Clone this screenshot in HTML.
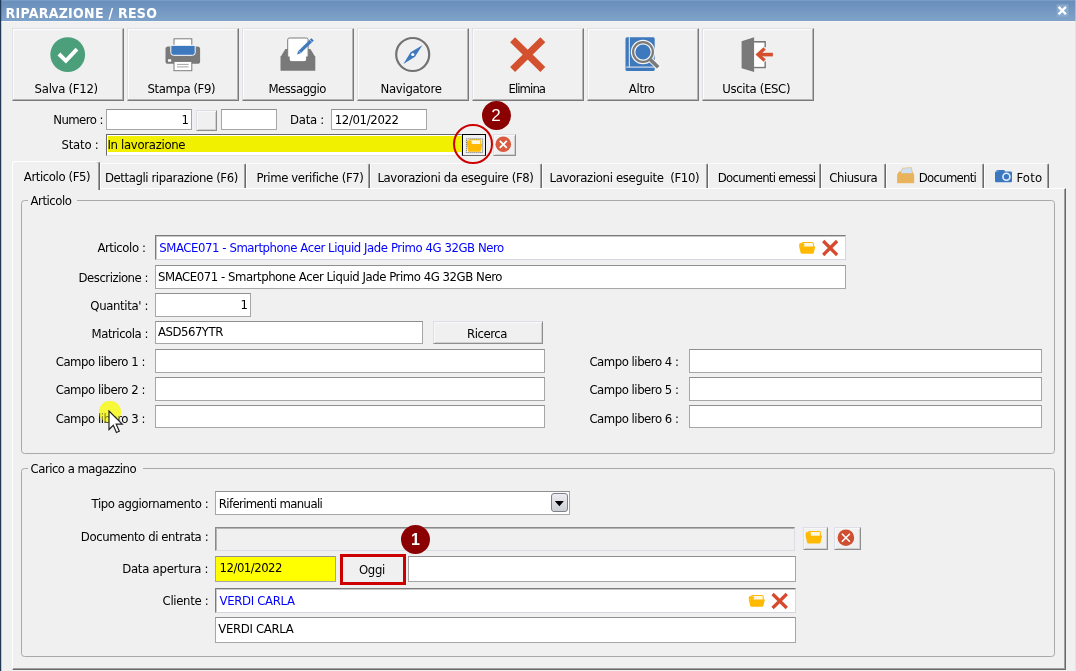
<!DOCTYPE html>
<html lang="it"><head><meta charset="utf-8"><title>RIPARAZIONE / RESO</title>
<style>
html,body{margin:0;padding:0;}
body{width:1076px;height:671px;overflow:hidden;background:#f0f0f0;font-family:'DejaVu Sans Condensed','Liberation Sans',sans-serif;font-size:13px;color:#000;}
#win{position:relative;width:1076px;height:671px;overflow:hidden;background:#f0f0f0;}
#win div,#win svg{position:absolute;box-sizing:border-box;}
.t{white-space:pre;line-height:20px;height:20px;}
#title{left:0;top:0;width:1076px;height:22px;background:linear-gradient(#7b9dc5 0,#7b9dc5 1px,#6a8fba 1px,#6b90bb 3px,#7fa2c9 20px,#7b9fc8 21px,#f5f5f3 21px);}
#lb{left:0;top:0;width:2px;height:671px;background:linear-gradient(90deg,#1e3856 50%,rgba(30,56,86,.22) 50%);}
#rb{left:1075px;top:0;width:1px;height:671px;background:linear-gradient(#9db8d8 0,#a9c1de 21px,#d9e5f2 21px);}
.tb{top:28px;height:73px;width:112px;border:1px solid;border-color:#e0e0e6 #7a7a7a #7a7a7a #e0e0e6;background:#f0f0f0;box-shadow:inset -1px -1px 0 #b4b4b4, inset 1px 1px 0 #fcfcfc;}
.in{background:#fff;border:1px solid #a6a6a6;border-top-color:#8f8f8f;}
.btn{background:#f0f0f0;border:1px solid;border-color:#fff #a0a0a0 #a0a0a0 #fff;box-shadow:1px 1px 0 #696969;}
.sep{width:2px;background:linear-gradient(90deg,#a0a0a0 50%,#696969 50%);}
.gb{border:1px solid #a9a9a9;border-radius:3.5px;}
.gl{background:#f0f0f0;height:12px;}
.tab{top:163px;height:25px;border:1px solid;border-color:#fcfcfc #696969 transparent #fcfcfc;border-bottom:none;box-shadow:inset -1px 0 0 #a0a0a0;border-radius:2px 2px 0 0;}
.btn2{background:#f0f0f0;border:1px solid;border-color:#dedee6 #8e8e8e #8e8e8e #dedee6;box-shadow:inset 1px 1px 0 #f8f8f8, inset -1px -1px 0 #d0d0d0;}
.sk{border-color:#7c7c7c #d6d6e0 #d6d6e0 #7c7c7c;box-shadow:inset 1px 1px 0 #c8c8c8;}

</style></head>
<body>
<div id="win">
<div id="title"></div>
<svg style="left:1056px;top:4px" width="13" height="13" viewBox="0 0 13 13"><rect x=".6" y=".3" width="11.8" height="12.4" fill="#90afd2" opacity=".75"/><path d="M2.6 2.9L9.9 10.2M9.9 2.9L2.6 10.2" stroke="#fff" stroke-width="2.3"/></svg>
<div id="lb"></div><div id="rb"></div>
<!-- toolbar -->
<div class="tb" style="left:12px"></div>
<div class="tb" style="left:127px"></div>
<div class="tb" style="left:242px"></div>
<div class="tb" style="left:357px"></div>
<div class="tb" style="left:472px"></div>
<div class="tb" style="left:587px"></div>
<div class="tb" style="left:702px"></div>
<!-- ICONS -->
<!-- top rows -->
<div class="in" style="left:106px;top:109px;width:86px;height:21px"></div>
<div class="btn2" style="left:196px;top:110px;width:21px;height:21px"></div>
<div class="in" style="left:221px;top:109px;width:56px;height:21px"></div>
<div class="in" style="left:331px;top:109px;width:96px;height:21px"></div>
<div class="in" style="left:106px;top:134px;width:356px;height:22px;border-color:#696969 #e3e3e3 #e3e3e3 #696969"><div style="left:1px;top:1px;width:354px;height:16px;background:#f0f000"></div></div>
<div class="btn" style="left:462px;top:134px;width:24px;height:22px;border-color:#000 #000 #696969 #000;box-shadow:none"></div>
<div class="btn2" style="left:493px;top:134px;width:23px;height:22px"></div>
<!-- tab panel -->
<div id="panel" style="left:11.5px;top:188px;width:1054.5px;height:482px;border:1px solid;border-color:#fff #696969 #696969 #fff;box-shadow:inset -1px -1px 0 #a0a0a0"></div>
<div id="tab1" style="left:12px;top:161px;width:88px;height:29px;background:#f0f0f0;border:1px solid;border-color:#fff #696969 transparent #fff;border-radius:3px 3px 0 0;border-bottom:none;box-shadow:inset -1px 0 0 #a0a0a0"></div>
<div class="tab" style="left:100px;width:146px"></div>
<div class="tab" style="left:246px;width:124px"></div>
<div class="tab" style="left:370px;width:172px"></div>
<div class="tab" style="left:542px;width:166px"></div>
<div class="tab" style="left:708px;width:113px"></div>
<div class="tab" style="left:821px;width:65px"></div>
<div class="tab" style="left:886px;width:98px"></div>
<div class="tab" style="left:984px;width:65px"></div>
<!-- group boxes -->
<div class="gb" style="left:21px;top:200px;width:1034px;height:254px"></div>
<div class="gl" style="left:28px;top:194px;width:49px"></div>
<div class="gb" style="left:21px;top:468px;width:1034px;height:189px"></div>
<div class="gl" style="left:28px;top:462px;width:115px"></div>
<!-- Articolo fields -->
<div class="in sk" style="left:155px;top:235px;width:691px;height:25px"></div>
<div class="in" style="left:155px;top:265px;width:691px;height:24px"></div>
<div class="in" style="left:155px;top:293px;width:96px;height:24px"></div>
<div class="in" style="left:155px;top:321px;width:268px;height:23px"></div>
<div class="btn2" style="left:433px;top:321px;width:110px;height:23px"></div>
<div class="in" style="left:155px;top:349px;width:390px;height:24px"></div>
<div class="in" style="left:155px;top:377px;width:390px;height:24px"></div>
<div class="in" style="left:155px;top:405px;width:390px;height:23px"></div>
<div class="in" style="left:689px;top:349px;width:353px;height:24px"></div>
<div class="in" style="left:689px;top:377px;width:353px;height:24px"></div>
<div class="in" style="left:689px;top:405px;width:353px;height:23px"></div>
<!-- Carico fields -->
<div class="in" style="left:215px;top:491px;width:355px;height:24px"></div>
<svg style="left:551px;top:493px" width="17" height="19" viewBox="0 0 17 19"><defs><linearGradient id="cg" x1="0" y1="0" x2="0" y2="1"><stop offset="0" stop-color="#ededf3"/><stop offset="1" stop-color="#cdcdd5"/></linearGradient></defs><rect x=".5" y=".5" width="16" height="18" rx="2.5" fill="url(#cg)" stroke="#808088"/><path d="M3.8 8h9.1l-4.55 5.2z" fill="#000"/></svg>
<div class="in" style="left:215px;top:527px;width:580px;height:24px;background:#f0f0f0;border-color:#8a8a8a #dcdce4 #dcdce4 #8a8a8a;box-shadow:inset 1px 1px 0 #b4b4b4"></div>
<div class="btn2" style="left:802.5px;top:527px;width:25.5px;height:23px"></div>
<div class="btn2" style="left:833.5px;top:527px;width:27.5px;height:23px"></div>
<div class="in" style="left:215px;top:556px;width:121px;height:26px;background:#ffff00"></div>
<div style="left:343px;top:557px;width:61px;height:25px;background:#f0f0f0"></div>
<div class="in" style="left:408px;top:556px;width:388px;height:26px"></div>
<div class="in sk" style="left:215px;top:588px;width:581px;height:25px"></div>
<div class="in" style="left:215px;top:617px;width:581px;height:26px"></div>
<svg id="icons" style="left:0;top:0" width="1076" height="671" viewBox="0 0 1076 671">
<!-- Salva -->
<circle cx="67.7" cy="54.6" r="17.4" fill="#4ba07b"/>
<path d="M58.9 54 L65.9 60.8 L77 49.2" fill="none" stroke="#fff" stroke-width="3.9"/>
<!-- Stampa -->
<rect x="174" y="38.8" width="17.8" height="9" fill="#fff" stroke="#7d7d7d" stroke-width="1"/>
<rect x="165.5" y="46.4" width="34.6" height="17.4" rx="2.6" fill="#797979"/>
<path d="M170.8 45.3h24.4v7.3a2.7 2.7 0 0 1 -2.7 2.7h-19a2.7 2.7 0 0 1 -2.7 -2.7z" fill="#3e79be" stroke="#fff" stroke-width="1"/>
<rect x="168" y="59.3" width="3.2" height="2.4" fill="#fff"/>
<rect x="174" y="61.5" width="17.8" height="9.2" fill="#fff" stroke="#7d7d7d" stroke-width="1"/>
<path d="M177 64.4h11.6M177 66.9h11.6" stroke="#9a9a9a" stroke-width="0.9"/>
<!-- Messaggio -->
<path d="M280.5 57 L285.4 49 H310.4 L315.3 57z" fill="#797979"/>
<rect x="287.7" y="38" width="20.4" height="24" rx="1.8" fill="#fff" stroke="#7d7d7d" stroke-width="1"/>
<path d="M280.5 56.5h9.2v2.8a2 2 0 0 0 2 2h12.4a2 2 0 0 0 2 -2v-2.8h9.2v14.3h-34.8z" fill="#797979"/>
<path d="M297 54.4 L298.3 51 L311.4 38.2 L313.8 40.6 L300.7 53.3z" fill="#3e79be"/><path d="M298.6 50.7l2.4 2.4M309.8 39.8l2.4 2.4" stroke="#cfdff0" stroke-width=".6"/>
<!-- Navigatore -->
<circle cx="412.7" cy="54.5" r="16.5" fill="none" stroke="#727272" stroke-width="2.2"/>
<path d="M422.4 45.2 L415 56.8 L403.4 63.9 L410.6 52.3z" fill="#3e79be"/>
<circle cx="412.8" cy="54.5" r="1.6" fill="#fff"/>
<!-- Elimina -->
<path d="M512.6 39.7L542.8 69.6M542.8 39.7L512.6 69.6" stroke="#d4512f" stroke-width="7"/>
<!-- Altro -->
<rect x="625.5" y="37.2" width="29.2" height="33.8" rx="1.5" fill="#3e79be"/>
<path d="M629.3 37.2V67.1M626.2 67.1H654.7" fill="none" stroke="#f0f0f0" stroke-width="1"/>
<circle cx="643" cy="52" r="9.9" fill="#3e79be" stroke="#f4f4f4" stroke-width="4.6"/>
<path d="M650.3 59.6L658.2 67.2" stroke="#f4f4f4" stroke-width="5.6" stroke-linecap="round"/>
<circle cx="643" cy="52" r="9.9" fill="none" stroke="#7a7a7a" stroke-width="2.2"/>
<path d="M650.3 59.6L658.2 67.2" stroke="#7a7a7a" stroke-width="3.6" stroke-linecap="butt"/>
<!-- Uscita -->
<path d="M754.1 42H765V47.2M765 61.6V67.3H754.1" fill="#fff" stroke="#787878" stroke-width="1.8"/>
<rect x="754" y="42.6" width="10.4" height="24.1" fill="#fff"/>
<path d="M741.6 41.2L754.1 37.2V72.1L741.6 68.2z" fill="#797979"/>
<path d="M759 54.6H772.9" stroke="#d4512f" stroke-width="3.6"/>
<path d="M764.6 48.6L758 54.6L764.6 60.6" fill="none" stroke="#d4512f" stroke-width="3.4"/>
<!-- Stato folder -->
<g transform="translate(466.6 139.3) scale(0.97 1.07)"><rect x="2.6" y=".5" width="11.9" height="6" rx="1" fill="#fff8e0" stroke="#ffb900" stroke-width="1"/><path d="M.1 4.8v-2.6a1 1 0 0 1 1 -1h4v3.6z" fill="#ffb900"/><path d="M0 4.4h16.2l-1.5 6.4a1.3 1.3 0 0 1 -1.3 .95h-10.6a1.3 1.3 0 0 1 -1.3 -.95z" fill="#ffb900"/></g>
<rect x="466.4" y="138.8" width="16.2" height="13.8" fill="none" stroke="#333" stroke-opacity=".75" stroke-width="1" stroke-dasharray="1 1"/>
<!-- Stato X -->
<circle cx="503.3" cy="144.3" r="7.8" fill="#da5a40"/>
<path d="M499.8 140.8l7 7m0 -7l-7 7" stroke="#fff" stroke-width="1.8"/>
<!-- Articolo folder + X -->
<g transform="translate(799.1 242)"><rect x="2.6" y=".5" width="11.9" height="6" rx="1" fill="#fff8e0" stroke="#ffb900" stroke-width="1"/><path d="M.1 4.8v-2.6a1 1 0 0 1 1 -1h4v3.6z" fill="#ffb900"/><path d="M0 4.4h16.2l-1.5 6.4a1.3 1.3 0 0 1 -1.3 .95h-10.6a1.3 1.3 0 0 1 -1.3 -.95z" fill="#ffb900"/></g>
<path d="M823.2 241L837.1 255M837.1 241L823.2 255" stroke="#d6492c" stroke-width="3.2"/>
<!-- Doc entrata folder btn + X btn -->
<g transform="translate(805.6 531) scale(1.02 1.06)"><rect x="2.6" y=".5" width="11.9" height="6" rx="1" fill="#fff8e0" stroke="#ffb900" stroke-width="1"/><path d="M.1 4.8v-2.6a1 1 0 0 1 1 -1h4v3.6z" fill="#ffb900"/><path d="M0 4.4h16.2l-1.5 6.4a1.3 1.3 0 0 1 -1.3 .95h-10.6a1.3 1.3 0 0 1 -1.3 -.95z" fill="#ffb900"/></g>
<circle cx="845.9" cy="537.7" r="8.3" fill="#d04e30"/>
<path d="M841.9 533.7l8 8m0 -8l-8 8" stroke="#fff" stroke-width="1.6"/>
<!-- Cliente folder + X -->
<g transform="translate(748.7 595)"><rect x="2.6" y=".5" width="11.9" height="6" rx="1" fill="#fff8e0" stroke="#ffb900" stroke-width="1"/><path d="M.1 4.8v-2.6a1 1 0 0 1 1 -1h4v3.6z" fill="#ffb900"/><path d="M0 4.4h16.2l-1.5 6.4a1.3 1.3 0 0 1 -1.3 .95h-10.6a1.3 1.3 0 0 1 -1.3 -.95z" fill="#ffb900"/></g>
<path d="M772.6 594L786.8 608M786.8 594L772.6 608" stroke="#d6492c" stroke-width="3.2"/>
<!-- tab icons -->
<path d="M897.3 174.5l1.6 -3h13.6l1.6 3v8.5h-16.8z" fill="#e9b35b"/>
<path d="M901 170.8l1.6 -2.6l8.8 -.6l1 6h-11.4z" fill="#cfe0f4" stroke="#e9b35b" stroke-width=".6"/>
<path d="M897.3 175h16.8v8.2h-16.8z" fill="#e9b35b"/>
<path d="M995 172.6a1.2 1.2 0 0 1 1.2 -1.2h2.2l.8 -1.4h5l.8 1.4h5.8a1.2 1.2 0 0 1 1.2 1.2v8.4a1.2 1.2 0 0 1 -1.2 1.2h-14.6a1.2 1.2 0 0 1 -1.2 -1.2z" fill="#3b78c0"/>
<circle cx="1006.4" cy="176.7" r="3.5" fill="#3b78c0" stroke="#e8eef8" stroke-width="1.6"/><rect x="996.4" y="170.2" width="3" height="1.4" fill="#3b78c0"/>
</svg>

<!-- text labels -->
<div class="t" style="left:5.5px;top:3.0px;letter-spacing:0.28px;color:#fff;font-weight:bold;font-size:14px;">RIPARAZIONE / RESO</div>
<div class="t" style="left:34.6px;top:79.0px;letter-spacing:-0.28px;">Salva (F12)</div>
<div class="t" style="left:147.6px;top:79.0px;letter-spacing:-0.43px;">Stampa (F9)</div>
<div class="t" style="left:268.4px;top:79.0px;letter-spacing:-0.48px;">Messaggio</div>
<div class="t" style="left:380.6px;top:79.0px;letter-spacing:-0.32px;">Navigatore</div>
<div class="t" style="left:508.5px;top:79.0px;letter-spacing:-0.93px;">Elimina</div>
<div class="t" style="left:628.8px;top:79.0px;letter-spacing:-0.32px;">Altro</div>
<div class="t" style="left:722.3px;top:79.0px;letter-spacing:-0.34px;">Uscita (ESC)</div>
<div class="t" style="left:53.2px;top:110.0px;letter-spacing:-0.55px;">Numero :</div>
<div class="t" style="left:181.5px;top:110.0px;letter-spacing:-1.25px;">1</div>
<div class="t" style="left:290.0px;top:110.0px;letter-spacing:-0.27px;">Data :</div>
<div class="t" style="left:334.7px;top:110.0px;letter-spacing:-0.34px;">12/01/2022</div>
<div class="t" style="left:61.5px;top:135.0px;letter-spacing:-0.21px;">Stato :</div>
<div class="t" style="left:107.4px;top:135.0px;letter-spacing:-0.31px;">In lavorazione</div>
<div class="t" style="left:23.8px;top:167.0px;letter-spacing:-0.4px;">Articolo (F5)</div>
<div class="t" style="left:104.9px;top:168.0px;letter-spacing:-0.4px;">Dettagli riparazione (F6)</div>
<div class="t" style="left:256.5px;top:168.0px;letter-spacing:-0.39px;">Prime verifiche (F7)</div>
<div class="t" style="left:377.4px;top:168.0px;letter-spacing:-0.36px;">Lavorazioni da eseguire (F8)</div>
<div class="t" style="left:549.5px;top:168.0px;letter-spacing:-0.35px;">Lavorazioni eseguite&nbsp; (F10)</div>
<div class="t" style="left:717.7px;top:168.0px;letter-spacing:-0.69px;">Documenti emessi</div>
<div class="t" style="left:829.3px;top:168.0px;letter-spacing:-0.48px;">Chiusura</div>
<div class="t" style="left:918.8px;top:168.0px;letter-spacing:-0.73px;">Documenti</div>
<div class="t" style="left:1016.4px;top:168.0px;letter-spacing:0.21px;">Foto</div>
<div class="t" style="left:30.6px;top:191.0px;letter-spacing:-0.47px;">Articolo</div>
<div class="t" style="left:97.4px;top:238.0px;letter-spacing:-0.42px;">Articolo :</div>
<div class="t" style="left:159.3px;top:238.0px;letter-spacing:-0.43px;color:#0000ff;">SMACE071 - Smartphone Acer Liquid Jade Primo 4G 32GB Nero</div>
<div class="t" style="left:78.5px;top:268.0px;letter-spacing:-0.47px;">Descrizione :</div>
<div class="t" style="left:158.0px;top:267.0px;letter-spacing:-0.44px;">SMACE071 - Smartphone Acer Liquid Jade Primo 4G 32GB Nero</div>
<div class="t" style="left:90.3px;top:296.0px;letter-spacing:-0.36px;">Quantita&#x27; :</div>
<div class="t" style="left:240.5px;top:295.0px;letter-spacing:-1.45px;">1</div>
<div class="t" style="left:91.6px;top:324.0px;letter-spacing:-0.47px;">Matricola :</div>
<div class="t" style="left:158.1px;top:322.0px;letter-spacing:-0.5px;">ASD567YTR</div>
<div class="t" style="left:467.0px;top:324.0px;letter-spacing:-0.43px;">Ricerca</div>
<div class="t" style="left:55.7px;top:352.0px;letter-spacing:-0.46px;">Campo libero 1 :</div>
<div class="t" style="left:589.4px;top:352.0px;letter-spacing:-0.47px;">Campo libero 4 :</div>
<div class="t" style="left:55.7px;top:380.0px;letter-spacing:-0.46px;">Campo libero 2 :</div>
<div class="t" style="left:589.4px;top:380.0px;letter-spacing:-0.47px;">Campo libero 5 :</div>
<div class="t" style="left:55.7px;top:409.0px;letter-spacing:-0.46px;">Campo libero 3 :</div>
<div class="t" style="left:589.4px;top:409.0px;letter-spacing:-0.47px;">Campo libero 6 :</div>
<div class="t" style="left:30.6px;top:459.0px;letter-spacing:-0.52px;">Carico a magazzino</div>
<div class="t" style="left:91.6px;top:494.0px;letter-spacing:-0.43px;">Tipo aggiornamento :</div>
<div class="t" style="left:218.8px;top:494.0px;letter-spacing:-0.63px;">Riferimenti manuali</div>
<div class="t" style="left:80.8px;top:527.0px;letter-spacing:-0.41px;">Documento di entrata :</div>
<div class="t" style="left:122.2px;top:559.0px;letter-spacing:-0.25px;">Data apertura :</div>
<div class="t" style="left:219.6px;top:558.0px;letter-spacing:-0.5px;">12/01/2022</div>
<div class="t" style="left:359.0px;top:560.0px;letter-spacing:-0.33px;">Oggi</div>
<div class="t" style="left:162.6px;top:591.0px;letter-spacing:-0.34px;">Cliente :</div>
<div class="t" style="left:219.6px;top:591.0px;letter-spacing:-0.34px;color:#0000ff;">VERDI CARLA</div>
<div class="t" style="left:218.3px;top:619.0px;letter-spacing:-0.34px;">VERDI CARLA</div>
<!-- annotations -->
<div style="left:453.2px;top:124.1px;width:40.2px;height:40.2px;border:2.6px solid #cc0000;border-radius:50%"></div>
<div style="left:482px;top:101px;width:29px;height:29px;border-radius:50%;background:#8b0000"></div>
<div class="t" style="left:481.6px;top:105.5px;width:29px;text-align:center;color:#fff;font-family:'Liberation Sans',sans-serif;font-size:17px">2</div>
<div style="left:340px;top:554px;width:66px;height:31px;border:3.7px solid #cc0000"></div>
<div style="left:401px;top:525px;width:29px;height:29px;border-radius:50%;background:#8b0000"></div>
<div class="t" style="left:401px;top:529.5px;width:29px;text-align:center;color:#fff;font-family:'Liberation Sans',sans-serif;font-size:16px;font-weight:bold">1</div>
<div style="left:99px;top:401px;width:21.6px;height:21.6px;border-radius:50%;background:#ffff3e;mix-blend-mode:multiply"></div><div style="left:99px;top:401px;width:21.6px;height:21.6px;border-radius:50%;background:rgba(255,255,60,.5)"></div>
<svg style="left:108px;top:410px" width="16" height="24" viewBox="0 0 16 24"><path d="M1 1v18.5l4.3-4.2 3.1 7.2 2.9-1.3-3.1-7h6z" fill="#fff" stroke="#222" stroke-width="1.2" stroke-linejoin="miter"/></svg>

</div>
</body></html>
